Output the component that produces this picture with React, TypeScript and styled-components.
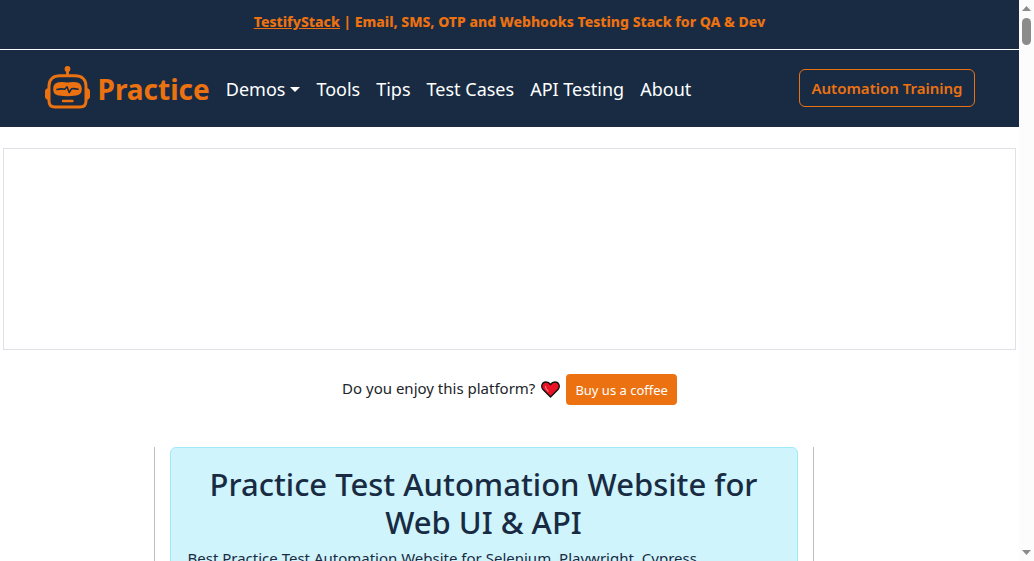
import React from "react";
import styled, { createGlobalStyle } from "styled-components";

const orange = "#ec7211";
const navy = "#182b43";

const GlobalStyle = createGlobalStyle`
  *, *::before, *::after { box-sizing: border-box; }
  body {
    margin: 0;
    background: #fff;
    color: #212529;
    font-family: "Segoe UI", "Noto Sans", "Open Sans", sans-serif;
    font-size: 15px;
    line-height: 24px;
  }
  h1, p { margin: 0; }
`;

const Shell = styled.div`
  display: flex;
  height: 100vh;
  overflow: hidden;
`;

const Page = styled.div`
  flex: 1;
  min-width: 0;
`;

const Banner = styled.div`
  padding: 10px 16px 15px;
  border-bottom: 1px solid #fff;
  background: ${navy};
  color: ${orange};
  font-size: 14px;
  font-weight: 800;
  text-align: center;
  a { color: inherit; }
`;

const Header = styled.header`
  background: ${navy};
`;

const Container = styled.div`
  max-width: 960px;
  margin: 0 auto;
`;

const Nav = styled.nav`
  display: flex;
  align-items: center;
  padding: 16px 15px 17px;
`;

const Brand = styled.a`
  display: flex;
  align-items: center;
  gap: 8px;
  margin-right: 16px;
  color: ${orange};
  font-size: 28px;
  font-weight: 700;
  text-decoration: none;
`;

const BrandName = styled.span`
  padding-top: 2px;
`;

const Menu = styled.ul`
  display: flex;
  gap: 16px;
  margin: 0;
  padding: 2px 0 0;
  list-style: none;
`;

const MenuLink = styled.a`
  display: flex;
  align-items: center;
  gap: 5px;
  color: #fff;
  font-size: 18px;
  text-decoration: none;
  white-space: nowrap;
`;

const Caret = styled.span`
  border: 5px solid transparent;
  border-top-color: #fff;
  border-bottom: 0;
`;

const TrainingButton = styled.button`
  height: 38px;
  margin-left: auto;
  padding: 0 11px;
  border: 1px solid ${orange};
  border-radius: 6px;
  background: transparent;
  color: ${orange};
  font: inherit;
  font-weight: 600;
  white-space: nowrap;
`;

const AdSlot = styled.div`
  height: 202px;
  margin: 21px 3px 24px;
  border: 1px solid #dee2e6;
`;

const Support = styled.div`
  display: flex;
  align-items: center;
  justify-content: center;
  gap: 6px;
  margin-bottom: 42px;
`;

const SupportText = styled.p`
  padding-bottom: 3px;
`;

const CoffeeButton = styled.button`
  height: 31px;
  padding: 1px 9px 0;
  border: 0;
  border-radius: 4px;
  background: ${orange};
  color: #fff;
  font: inherit;
  font-size: 13px;
`;

const Columns = styled(Container)`
  display: grid;
  grid-template-columns: 124fr 660fr 176fr;
`;

const Main = styled.main`
  grid-column: 2;
  padding: 0 15px;
  border: solid #bfbfbf;
  border-width: 0 1px;
`;

const Intro = styled.section`
  padding: 17px;
  border: 1px solid #9eeaf9;
  border-radius: 6px;
  background: #cff4fc;
  color: ${navy};
`;

const Title = styled.h1`
  margin-bottom: 5px;
  font-size: 31px;
  font-weight: 500;
  line-height: 38px;
  text-align: center;
`;

const Scrollbar = styled.div`
  display: flex;
  flex: 0 0 15px;
  flex-direction: column;
  align-items: center;
  justify-content: space-between;
  padding: 6px 0;
  background: #fcfcfc;
`;

const Thumb = styled.div`
  width: 9px;
  height: 27px;
  margin: 7px 0 auto;
  border-radius: 5px;
  background: #8b8b8b;
`;

const RobotLogo = () => (
  <svg width="45" height="44" viewBox="0 0 45 44" fill="none" aria-hidden="true">
    <circle cx="22.5" cy="2.900" r="2.900" fill={orange} />
    <path d="M22.5 4v6" stroke={orange} strokeWidth="2.800" />
    <path
      d="M4 20C4 13 8.500 9.800 15 9.800h15c6.500 0 11 3.200 11 10.200v15c0 4-2 6-6 6H10c-4 0-6-2-6-6z"
      stroke={orange}
      strokeWidth="3"
    />
    <path d="M3.500 22C1 22.500 0 23.500 0 25.500v5c0 2 1 3 3.500 3.500zM41.500 22C44 22.500 45 23.500 45 25.500v5c0 2-1 3-3.500 3.500z" fill={orange} />
    <path
      d="M14 16.300q3-.8 8.500.2 5.500-1 8.500-.2c4 .5 5.800 2.900 5.800 6.800s-1.800 6-5.800 6.500q-8.500 1.400-17 0c-4-.5-5.800-2.600-5.800-6.500s1.800-6.300 5.800-6.800z"
      fill={orange}
    />
    <path d="M12 23.500q4.500-1.200 7.800-.2l2.200-2.500 2.200 5.700 2.300-3.700q3-.5 6.500.5" stroke={navy} strokeWidth="1.600" strokeLinecap="round" strokeLinejoin="round" />
    <path d="M18 35h9.500" stroke={orange} strokeWidth="2.400" strokeLinecap="round" />
  </svg>
);

const Heart = () => (
  <svg width="19" height="18" viewBox="0 0 19 18" role="img" aria-label="love">
    <path
      d="M9.500 16L2 8.500C-.5 5.500 1 1 5 1c2 0 3.500 1 4.500 2.500 1-1.500 2.500-2.500 4.500-2.500 4 0 5.500 4.500 3 7.500z"
      fill="#e81224"
      stroke="#111"
      strokeWidth="1.400"
      strokeLinejoin="round"
    />
    <path d="M4.500 5.500c0 2 1 3 2.500 4.500" fill="none" stroke="#f4707a" strokeWidth="1.300" strokeLinecap="round" />
  </svg>
);

const Arrow = ({ down = false }: { down?: boolean }) => (
  <svg width="9" height="5" viewBox="0 0 9 5" aria-hidden="true">
    <path d={down ? "M0 0h9L4.500 5z" : "M0 5h9L4.500 0z"} fill="#8b8b8b" />
  </svg>
);

const links = ["Tools", "Tips", "Test Cases", "API Testing", "About"];

export default function App() {
  return (
    <Shell>
      <GlobalStyle />
      <Page>
        <Banner>
          <a href="#testifystack">TestifyStack</a> | Email, SMS, OTP and Webhooks Testing Stack for QA &amp; Dev
        </Banner>
        <Header>
          <Container>
            <Nav>
              <Brand href="#home">
                <RobotLogo />
                <BrandName>Practice</BrandName>
              </Brand>
              <Menu>
                <li>
                  <MenuLink href="#demos">
                    Demos
                    <Caret />
                  </MenuLink>
                </li>
                {links.map((label) => (
                  <li key={label}>
                    <MenuLink href="#">{label}</MenuLink>
                  </li>
                ))}
              </Menu>
              <TrainingButton type="button">Automation Training</TrainingButton>
            </Nav>
          </Container>
        </Header>
        <AdSlot />
        <Support>
          <SupportText>Do you enjoy this platform?</SupportText>
          <Heart />
          <CoffeeButton type="button">Buy us a coffee</CoffeeButton>
        </Support>
        <Columns>
          <Main>
            <Intro>
              <Title>Practice Test Automation Website for Web UI &amp; API</Title>
              <p>Best Practice Test Automation Website for Selenium, Playwright, Cypress</p>
            </Intro>
          </Main>
        </Columns>
      </Page>
      <Scrollbar aria-hidden="true">
        <Arrow />
        <Thumb />
        <Arrow down />
      </Scrollbar>
    </Shell>
  );
}
